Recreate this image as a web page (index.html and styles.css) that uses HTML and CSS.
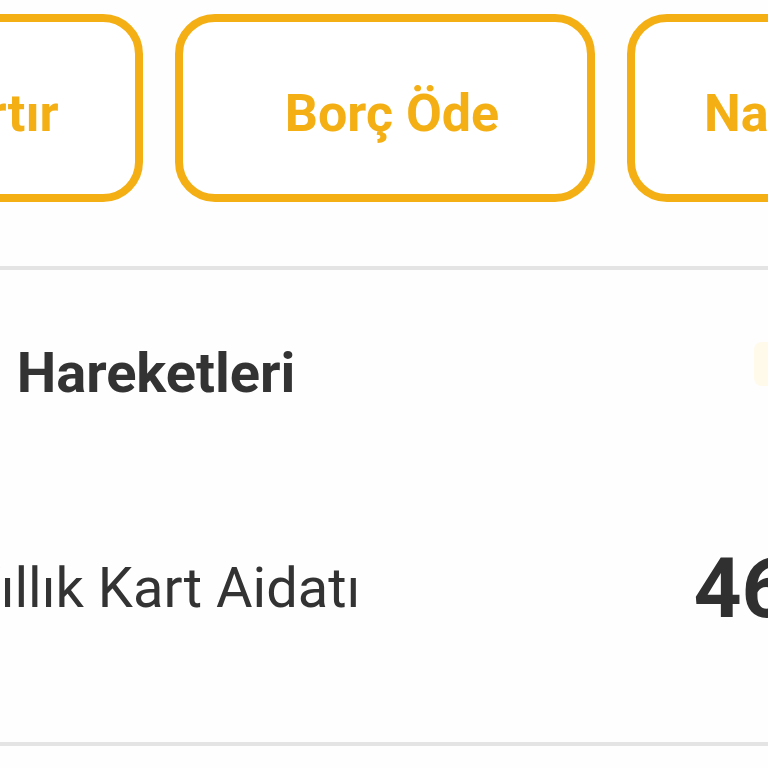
FILE: index.html
```html
<!DOCTYPE html>
<html lang="tr">
<head>
<meta charset="utf-8">
<title>Kart</title>
<link rel="stylesheet" href="styles.css">
</head>
<body>
<div class="screen">
  <div class="actions">
    <button class="action">Limit Artır</button>
    <button class="action">Borç Öde</button>
    <button class="action">Nakit Avans</button>
  </div>
  <div class="divider"></div>
  <div class="section-head">
    <h2 class="section-title">İşlem Hareketleri</h2>
    <span class="section-icon"></span>
  </div>
  <div class="txn">
    <span class="txn-name">Yıllık Kart Aidatı</span>
    <span class="txn-amount">46,00 TL</span>
  </div>
  <div class="divider divider-bottom"></div>
</div>
</body>
</html>
```
FILE: styles.css
```css
html, body {
  margin: 0;
  padding: 0;
  background: #fefefe;
  overflow: hidden;
  width: 768px;
  height: 768px;
}
.screen {
  font-family: Roboto, "Noto Sans", "Liberation Sans", sans-serif;
  color: #333333;
  width: 768px;
}
.actions {
  display: flex;
  gap: 32px;
  margin-left: -277px;
  padding-top: 14px;
}
.action {
  flex: 0 0 420px;
  height: 188px;
  box-sizing: border-box;
  border: 8px solid #f3af14;
  border-radius: 40px;
  background: #ffffff;
  color: #f3af14;
  font-family: Roboto, "Noto Sans", "Liberation Sans", sans-serif;
  font-weight: 700;
  font-size: 52px;
  padding: 10px 0 0 14px;
  white-space: nowrap;
}
.divider {
  height: 4px;
  background: #e4e4e4;
  margin-top: 64px;
}
.section-head {
  display: flex;
  align-items: flex-start;
  justify-content: space-between;
  height: 216px;
}
.section-title {
  margin: 75px 0 0 -136px;
  font-size: 56px;
  font-weight: 700;
  color: #333333;
  white-space: nowrap;
  line-height: 1;
}
.section-icon {
  margin-top: 72px;
  width: 14px;
  height: 44px;
  background: #fff6dc;
  border-radius: 8px 0 0 8px;
  opacity: 0.6;
}
.txn {
  display: flex;
  align-items: flex-start;
  justify-content: space-between;
  height: 256px;
}
.txn-name {
  margin: 74px 0 0 -33px;
  font-size: 56px;
  font-weight: 400;
  color: #333333;
  white-space: nowrap;
  line-height: 1;
}
.txn-amount {
  margin: 61px -255px 0 0;
  font-size: 84px;
  font-weight: 700;
  color: #303030;
  white-space: nowrap;
  line-height: 1;
}
.divider-bottom {
  margin-top: 0;
}
```
